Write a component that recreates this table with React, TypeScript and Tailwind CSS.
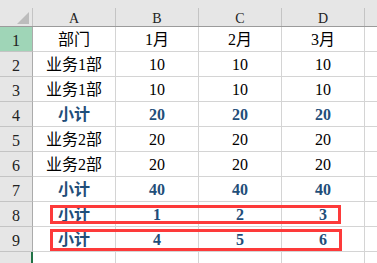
const cols = ["A", "B", "C", "D"];

type Row = { cells: string[]; total?: boolean };

const rows: Row[] = [
  { cells: ["部门", "1月", "2月", "3月"] },
  { cells: ["业务1部", "10", "10", "10"] },
  { cells: ["业务1部", "10", "10", "10"] },
  { cells: ["小计", "20", "20", "20"], total: true },
  { cells: ["业务2部", "20", "20", "20"] },
  { cells: ["业务2部", "20", "20", "20"] },
  { cells: ["小计", "40", "40", "40"], total: true },
  { cells: ["小计", "1", "2", "3"], total: true },
  { cells: ["小计", "4", "5", "6"], total: true },
];

// SimSun-like look: serif digits, CJK fallback
const font = { fontFamily: '"Liberation Serif", "Noto Sans CJK SC", serif' };

export default function App() {
  return (
    <div className="relative w-[377px] h-[263px] overflow-hidden bg-white" style={font}>
      {/* top strip */}
      <div className="h-[8px] bg-[#e6e6e6]" />

      {/* column header */}
      <div className="flex h-[19px] bg-[#e6e6e6] border-b border-[#9b9b9b] text-[14px] text-[#222]">
        <div className="relative w-[33px] shrink-0 border-r border-[#c4c4c4]">
          <div className="absolute right-[3px] bottom-[2px] w-0 h-0 border-l-[12px] border-l-transparent border-b-[12px] border-b-[#bcbcbc]" />
        </div>
        {cols.map((c) => (
          <div key={c} className="w-[83px] shrink-0 border-r border-[#c4c4c4] flex items-center justify-center pt-[2px]">
            {c}
          </div>
        ))}
        <div className="flex-1" />
      </div>

      {/* data rows */}
      {rows.map((r, i) => (
        <div key={i} className="flex h-[25px]">
          <div
            className={`w-[33px] shrink-0 border-r border-b border-r-[#ababab] border-b-[#c4c4c4] flex items-center justify-center pt-[3px] text-[16px] text-[#222] ${
              i === 0 ? "bg-[#9fd5b7]" : "bg-[#e6e6e6]"
            }`}
          >
            {i + 1}
          </div>
          {r.cells.map((t, j) => (
            <div
              key={j}
              className={`w-[83px] shrink-0 border-r border-b border-[#d4d4d4] flex items-center justify-center pt-[1px] text-[16px] ${
                r.total ? "font-bold text-[#1f4e79]" : "text-black"
              }`}
            >
              {t}
            </div>
          ))}
          <div className="flex-1 border-b border-[#d4d4d4]" />
        </div>
      ))}

      {/* row 10, partially visible */}
      <div className="flex h-[25px]">
        <div className="w-[33px] shrink-0 bg-[#e6e6e6] border-r-2 border-[#217346]" />
        {cols.map((c) => (
          <div key={c} className="w-[83px] shrink-0 border-r border-[#d4d4d4]" />
        ))}
      </div>

      {/* red highlight boxes */}
      <div className="absolute left-[50px] top-[205px] w-[291px] h-[19px] border-[3px] border-[#fd3a3a]" />
      <div className="absolute left-[50px] top-[229px] w-[292px] h-[22px] border-[3px] border-[#fd3a3a]" />
    </div>
  );
}
